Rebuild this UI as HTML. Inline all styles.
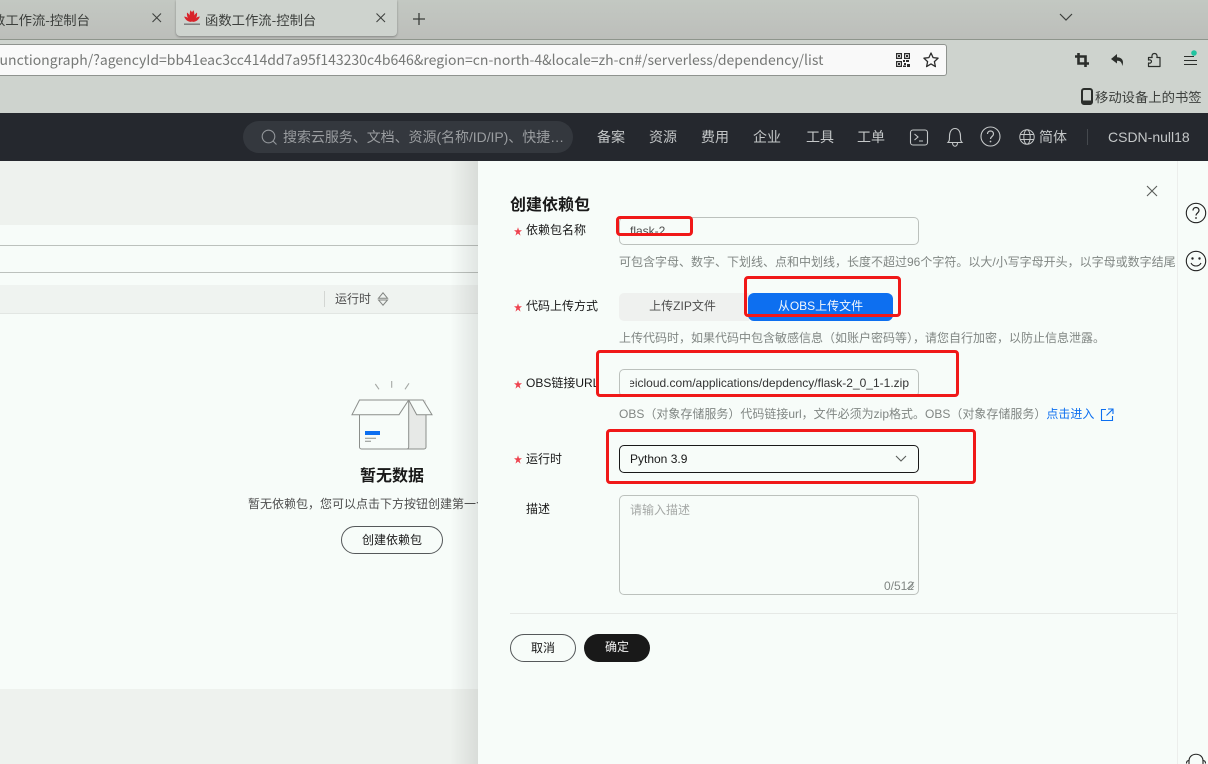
<!DOCTYPE html>
<html lang="zh-CN"><head><meta charset="utf-8"><title>函数工作流-控制台</title>
<style>
html,body{margin:0;padding:0;width:1208px;height:764px;overflow:hidden;background:#eef2ee}
body{position:relative;font-family:"Liberation Sans","Noto Sans CJK SC",sans-serif;font-size:12px;color:#191919}
.a{position:absolute;white-space:nowrap}
.n{font-family:"Noto Sans CJK SC","Liberation Sans",sans-serif}
.b{position:absolute;box-sizing:border-box}
svg{position:absolute;overflow:visible}
.nav{position:absolute;top:128px;color:#c4c7c8;font-size:14px;line-height:18px;white-space:nowrap}
.hint{position:absolute;color:#808683;font-size:12px;line-height:16px;white-space:nowrap}
.lab{position:absolute;left:526px;font-size:12px;line-height:16px;color:#191919;white-space:nowrap}
.red{position:absolute;box-sizing:border-box;border:3px solid #f01818;border-radius:4px}
</style></head><body>

<div class="b" style="left:0;top:0;width:1208px;height:39px;background:linear-gradient(#c3c8c2,#bcbeba)"></div>
<div class="b" style="left:0;top:39px;width:1208px;height:1px;background:#8e958c"></div>
<div class="b" style="left:0;top:40px;width:1208px;height:73px;background:#ced3ce"></div>

<div class="a n" style="left:-8px;top:10px;font-size:13.33px;line-height:20px;color:#3c3f3c">数工作流-控制台</div>
<svg style="left:151px;top:12px" width="12" height="12"><path d="M1.500 1.500L10 10M10 1.500L1.500 10" stroke="#3f423f" stroke-width="1.100"/></svg>
<div class="b" style="left:176px;top:0;width:221px;height:36px;background:#ced3ce;border-radius:0 0 4px 4px;box-shadow:0 1px 2px rgba(0,0,0,.3)"></div>
<svg style="left:184px;top:10px" width="16" height="16" viewBox="0 0 16 16"><g fill="#d8232a"><path d="M7.600 12C5 8 5.400 3 6.500 .3 9.300 3 9.600 8 7.600 12z"/><path d="M8.400 12C6.400 8 6.700 3 9.500 .3 10.600 3 11 8 8.400 12z"/><path d="M7.400 12C4 9.500 2.500 6 3 2.500 6 4.500 7.800 8.500 7.400 12z"/><path d="M8.600 12C8.200 8.500 10 4.500 13 2.500 13.500 6 12 9.500 8.600 12z"/><path d="M7 12C3.500 11.500 1 9.500 .2 6.500 3.500 7 6 9 7 12z"/><path d="M9 12C10 9 12.500 7 15.800 6.500 15 9.500 12.500 11.500 9 12z"/></g><rect x="0" y="13.500" width="16" height="1.400" fill="#777"/></svg>
<div class="a n" style="left:205px;top:10px;font-size:13.33px;line-height:20px;color:#3c3f3c">函数工作流-控制台</div>
<svg style="left:375px;top:12px" width="12" height="12"><path d="M1.500 1.500L10 10M10 1.500L1.500 10" stroke="#3f423f" stroke-width="1.100"/></svg>
<svg style="left:412px;top:12px" width="14" height="14"><path d="M7 1v12M1 7h12" stroke="#3a3d3a" stroke-width="1.300"/></svg>
<svg style="left:1059px;top:13px" width="14" height="9"><path d="M1 1l6 6 6-6" fill="none" stroke="#3c3f3c" stroke-width="1.200"/></svg>

<div class="b" style="left:-6px;top:44px;width:953px;height:32px;background:#f9f9f9;border:1px solid #8f938f;border-radius:3px"></div>
<div class="a n" style="left:-5px;top:50px;font-size:14px;line-height:20px;color:#767876">functiongraph/?agencyId=bb41eac3cc414dd7a95f143230c4b646&amp;region=cn-north-4&amp;locale=zh-cn#/serverless/dependency/list</div>
<svg style="left:896px;top:53px" width="14" height="14" viewBox="0 0 14 14"><g fill="#2c2c2c"><path d="M0 0h6v6H0zM1.200 1.200v3.600h3.600V1.200zM8 0h6v6H8zM9.200 1.200v3.600h3.600V1.200zM0 8h6v6H0zM1.200 9.200v3.600h3.600V9.200z" fill-rule="evenodd"/><rect x="2" y="2" width="2" height="2"/><rect x="10" y="2" width="2" height="2"/><rect x="2" y="10" width="2" height="2"/><rect x="7" y="7" width="2" height="2"/><rect x="10" y="7" width="3" height="2"/><rect x="8" y="10" width="2" height="2"/><rect x="11" y="11" width="3" height="3"/><rect x="7" y="12.500" width="3" height="1.500"/></g></svg>
<svg style="left:923px;top:52px" width="16" height="16" viewBox="0 0 16 16"><path d="M8 1l2.100 4.600 5 .6-3.700 3.400 1 5L8 11.900l-4.400 2.700 1-5L.9 6.200l5-.6z" fill="none" stroke="#2c2c2c" stroke-width="1.300" stroke-linejoin="round"/></svg>

<svg style="left:1075px;top:53px" width="14" height="14" viewBox="0 0 14 14"><path d="M3.500 0v10.500H14M0 3.500h10.500V14" fill="none" stroke="#2b2e2b" stroke-width="2.600"/></svg>
<svg style="left:1110px;top:52px" width="16" height="16" viewBox="0 0 16 16"><path d="M7 2L1 7l6 4.500V8.800c3 0 4.700 1 5.300 5.200 1.700-4.500.6-8.500-5.300-8.800z" fill="#2b2e2b"/></svg>
<svg style="left:1147px;top:52px" width="16" height="16" viewBox="0 0 16 16"><path d="M1.500 5.500h3.700c-.5-1-.5-4 2.300-4s2.800 3 2.300 4h3.200v9H1.500v-3.500c1.500.5 3-.2 3-1.500s-1.500-2-3-1.500z" fill="none" stroke="#2b2e2b" stroke-width="1.200" stroke-linejoin="round"/></svg>
<svg style="left:1183px;top:50px" width="16" height="17"><path d="M1 6.500h10M1 10.500h13M1 14.500h13" stroke="#2b2e2b" stroke-width="1.100"/><circle cx="11" cy="3" r="2.800" fill="#21c4a0"/></svg>

<svg style="left:1080px;top:88px" width="14" height="17" viewBox="0 0 14 17"><rect x="2" y="1" width="10" height="15" rx="2" fill="none" stroke="#2b2e2b" stroke-width="2"/><rect x="2" y="12.500" width="10" height="3.500" fill="#2b2e2b"/></svg>
<div class="a n" style="left:1095px;top:87px;font-size:13.33px;line-height:20px;color:#3c3f3c">移动设备上的书签</div>

<div class="b" style="left:0;top:113px;width:1208px;height:48px;background:#25282e"></div>
<div class="b" style="left:243px;top:121px;width:330px;height:32px;background:#34383e;border-radius:16px"></div>
<svg style="left:261px;top:129px" width="17" height="17" viewBox="0 0 17 17"><circle cx="7.500" cy="7.500" r="6.300" fill="none" stroke="#92969a" stroke-width="1.100"/><path d="M12 12l3.500 3.500" stroke="#92969a" stroke-width="1.100"/></svg>
<div class="a" style="left:283px;top:128px;font-size:14px;line-height:18px;color:#9a9da0;letter-spacing:-.05px">搜索云服务、文档、资源(名称/ID/IP)、快捷…</div>
<div class="nav" style="left:597px">备案</div>
<div class="nav" style="left:649px">资源</div>
<div class="nav" style="left:701px">费用</div>
<div class="nav" style="left:753px">企业</div>
<div class="nav" style="left:806px">工具</div>
<div class="nav" style="left:857px">工单</div>
<svg style="left:909px;top:129px" width="20" height="17" viewBox="0 0 20 17"><rect x="1.500" y="1" width="17" height="15" rx="2.500" fill="none" stroke="#c4c7c8" stroke-width="1.100"/><path d="M5.500 5l3.500 3-3.500 3M10 12h4" fill="none" stroke="#c4c7c8" stroke-width="1.100"/></svg>
<svg style="left:946px;top:127px" width="18" height="20" viewBox="0 0 18 20"><path d="M2 15.500c1.500-1.500 1.500-3 1.500-6.500C3.500 5 5.500 1.500 9 1.500s5.500 3.500 5.500 7.500c0 3.500 0 5 1.500 6.500zM6.500 15.500c0 5 5 5 5 0" fill="none" stroke="#c4c7c8" stroke-width="1.100"/></svg>
<svg style="left:980px;top:126px" width="21" height="21" viewBox="0 0 21 21"><circle cx="10.500" cy="10.500" r="9.500" fill="none" stroke="#c4c7c8" stroke-width="1.100"/><path d="M7.500 8c0-4 6-4 6 0 0 2.500-3 2.500-3 5" fill="none" stroke="#c4c7c8" stroke-width="1.200"/><circle cx="10.500" cy="15.500" r=".9" fill="#c4c7c8"/></svg>
<svg style="left:1019px;top:129px" width="16" height="16" viewBox="0 0 16 16"><g fill="none" stroke="#c4c7c8"><circle cx="8" cy="8" r="7.200"/><ellipse cx="8" cy="8" rx="3.200" ry="7.200"/><path d="M1 5.500h14M1 10.500h14"/></g></svg>
<div class="nav" style="left:1039px">简体</div>
<div class="b" style="left:1087px;top:129px;width:1px;height:16px;background:#45494e"></div>
<div class="nav" style="left:1108px">CSDN-null18</div>

<div class="b" style="left:0;top:225px;width:478px;height:464px;background:#f7fcf9"></div>
<div class="b" style="left:0;top:245px;width:478px;height:1px;background:#bcc1bd"></div>
<div class="b" style="left:0;top:272px;width:478px;height:1px;background:#bcc1bd"></div>
<div class="b" style="left:0;top:285px;width:478px;height:29px;background:#eff3f0;border-bottom:1px solid #e2e6e3"></div>
<div class="b" style="left:324px;top:291px;width:1px;height:16px;background:#d3d6d3"></div>
<div class="a" style="left:335px;top:291px;font-size:12px;line-height:16px;color:#4e4e4e">运行时</div>
<svg style="left:377px;top:292px" width="12" height="14" viewBox="0 0 12 14"><path d="M1.500 6.200L6 .8l4.500 5.400zM1.500 8h9L6 13.200z" fill="none" stroke="#808380"/></svg>

<svg style="left:0;top:0" width="478" height="460" viewBox="0 0 478 460"><path d="M409 400h17v47a2 2 0 0 1-2 2h-15z" fill="#e7e9e7"/><g fill="none" stroke="#8b8e8b" stroke-width="1"><path d="M359.500 414.700V447a2 2 0 0 0 2 2H424a2 2 0 0 0 2-2V414.700M408.700 400v47a2 2 0 0 1-2 2"/><path d="M352 414.700L359.500 400h49.200L399 414.700z" fill="#f7fcf9"/><path d="M408.700 400H423l9 14.700h-15.300z" fill="#f7fcf9"/><path d="M375.300 384l3.700 5.300M391.700 381v6.700M409 383.300l-4 6" stroke="#a5a8a5" stroke-width="1.100"/><path d="M365 438.300h11M365 441.300h6"/></g><rect x="365" y="431" width="15" height="4" fill="#0d6ff0"/></svg>
<div class="a" style="left:360px;top:466px;font-size:16px;line-height:22px;font-weight:bold;color:#191919">暂无数据</div>
<div class="a" style="left:248px;top:496px;font-size:12px;line-height:16px;color:#4e4e4e;width:230px;overflow:hidden">暂无依赖包，您可以点击下方按钮创建第一个</div>
<div class="b" style="left:341px;top:526px;width:102px;height:28px;border:1px solid #55585a;border-radius:14px;text-align:center;font-size:12px;line-height:26px;color:#191919">创建依赖包</div>

<div class="b" style="left:450px;top:161px;width:28px;height:603px;background:linear-gradient(90deg,rgba(0,0,0,0),rgba(0,0,0,.09))"></div>

<div class="b" style="left:478px;top:161px;width:699px;height:603px;background:#f7fcf9"></div>
<div class="b" style="left:1177px;top:161px;width:31px;height:603px;background:#f7fcf9;border-left:1px solid #eceeec"></div>
<svg style="left:1146px;top:185px" width="12" height="12"><path d="M1 1l10 10M11 1L1 11" stroke="#5a5d5a" stroke-width="1.100"/></svg>
<div class="a" style="left:510px;top:195px;font-size:16px;line-height:21px;font-weight:bold;color:#191919">创建依赖包</div>

<svg style="left:514px;top:227px" width="8" height="9" viewBox="0 0 8 9"><path d="M4 .3L5 3.300H8L5.600 5.300 6.500 8.600 4 6.500 1.500 8.600 2.400 5.300 0 3.300H3z" fill="#ee4450"/></svg>
<div class="lab" style="top:222px">依赖包名称</div>
<div class="b" style="left:619px;top:217px;width:300px;height:28px;border:1px solid #bcc1bd;border-radius:5px"></div>
<div class="a" style="left:630px;top:223px;font-size:12px;line-height:16px;color:#4e4e4e">flask-2</div>
<div class="hint" style="left:619px;top:254px">可包含字母、数字、下划线、点和中划线，长度不超过96个字符。以大/小写字母开头，以字母或数字结尾</div>

<svg style="left:514px;top:303px" width="8" height="9" viewBox="0 0 8 9"><path d="M4 .3L5 3.300H8L5.600 5.300 6.500 8.600 4 6.500 1.500 8.600 2.400 5.300 0 3.300H3z" fill="#ee4450"/></svg>
<div class="lab" style="top:298px">代码上传方式</div>
<div class="b" style="left:619px;top:293px;width:130px;height:28px;background:#eff1ef;border-radius:5px 0 0 5px;padding-right:3px;text-align:center;font-size:12px;line-height:27px;color:#4e4e4e">上传ZIP文件</div>
<div class="b" style="left:748px;top:293px;width:145px;height:28px;background:#0d6ff0;border-radius:6px;text-align:center;font-size:12px;line-height:27px;color:#f4f8fc">从OBS上传文件</div>
<div class="hint" style="left:619px;top:330px">上传代码时，如果代码中包含敏感信息（如账户密码等），请您自行加密，以防止信息泄露。</div>

<svg style="left:514px;top:380px" width="8" height="9" viewBox="0 0 8 9"><path d="M4 .3L5 3.300H8L5.600 5.300 6.500 8.600 4 6.500 1.500 8.600 2.400 5.300 0 3.300H3z" fill="#ee4450"/></svg>
<div class="lab" style="top:375px">OBS链接URL</div>
<div class="b" style="left:619px;top:369px;width:300px;height:28px;border:1px solid #bcc1bd;border-radius:5px"></div>
<div class="a" style="left:630px;top:375px;width:279px;font-size:12px;line-height:16px;color:#333;overflow:hidden;direction:rtl;text-align:left"><bdi>huaweicloud.com/applications/depdency/flask-2_0_1-1.zip</bdi></div>
<div class="hint" style="left:619px;top:406px">OBS（对象存储服务）代码链接url，文件必须为zip格式。OBS（对象存储服务）<span style="color:#0d6ff0">点击进入</span></div>
<svg style="left:1100px;top:408px" width="14" height="14" viewBox="0 0 14 14"><path d="M6 1.500H1.500v11h11V8M8 1h5v5M13 1L6.500 7.500" fill="none" stroke="#0d6ff0" stroke-width="1.100"/></svg>

<svg style="left:514px;top:455px" width="8" height="9" viewBox="0 0 8 9"><path d="M4 .3L5 3.300H8L5.600 5.300 6.500 8.600 4 6.500 1.500 8.600 2.400 5.300 0 3.300H3z" fill="#ee4450"/></svg>
<div class="lab" style="top:451px">运行时</div>
<div class="b" style="left:619px;top:445px;width:300px;height:28px;border:1px solid #191919;border-radius:5px"></div>
<div class="a" style="left:630px;top:451px;font-size:12px;line-height:16px;color:#191919">Python 3.9</div>
<svg style="left:895px;top:455px" width="12" height="8"><path d="M1 1l5 5 5-5" fill="none" stroke="#5a5d5a" stroke-width="1.100"/></svg>

<div class="lab" style="top:501px">描述</div>
<div class="b" style="left:619px;top:495px;width:300px;height:100px;border:1px solid #bcc1bd;border-radius:5px"></div>
<div class="a" style="left:630px;top:502px;font-size:12px;line-height:16px;color:#a5a8a6">请输入描述</div>
<div class="a" style="left:884px;top:578px;font-size:12px;line-height:16px;color:#808683">0/512</div>
<svg style="left:906px;top:581px" width="9" height="9"><path d="M1 8l7-7M5 8l3-3" stroke="#808683" stroke-width=".8"/></svg>
<div class="b" style="left:510px;top:613px;width:667px;height:1px;background:#e6e9e6"></div>

<div class="b" style="left:510px;top:634px;width:66px;height:28px;border:1px solid #55585a;border-radius:14px;text-align:center;font-size:12px;line-height:26px;color:#191919">取消</div>
<div class="b" style="left:584px;top:634px;width:66px;height:28px;background:#191919;border-radius:14px;text-align:center;font-size:12px;line-height:27px;color:#f4f4f4">确定</div>

<svg style="left:1185px;top:202px" width="22" height="22" viewBox="0 0 22 22"><circle cx="11" cy="11" r="9.700" fill="none" stroke="#222" stroke-width="1.100"/><path d="M8 8.500c0-4 6-4 6 0 0 2.500-3 2.500-3 5" fill="none" stroke="#222" stroke-width="1.200"/><circle cx="11" cy="16" r=".9" fill="#222"/></svg>
<svg style="left:1185px;top:250px" width="22" height="22" viewBox="0 0 22 22"><circle cx="11" cy="11" r="9.700" fill="none" stroke="#222" stroke-width="1.100"/><circle cx="7.500" cy="8.500" r="1.200" fill="#222"/><circle cx="14.500" cy="8.500" r="1.200" fill="#222"/><path d="M6 13c2 4 8 4 10 0" fill="none" stroke="#222" stroke-width="1.100"/></svg>
<svg style="left:1185px;top:753px" width="22" height="14" viewBox="0 0 22 14"><path d="M4 11V8c0-9 14-9 14 0v3M4 7.500c-2 0-2.500 1.500-2.500 3M18 7.500c2 0 2.500 1.500 2.500 3" fill="none" stroke="#222" stroke-width="1.100"/></svg>

<div class="red" style="left:616px;top:216px;width:77px;height:20px"></div>
<div class="red" style="left:744px;top:276px;width:157px;height:41px"></div>
<div class="red" style="left:596px;top:350px;width:363px;height:47px"></div>
<div class="red" style="left:606px;top:429px;width:370px;height:55px"></div>
</body></html>
